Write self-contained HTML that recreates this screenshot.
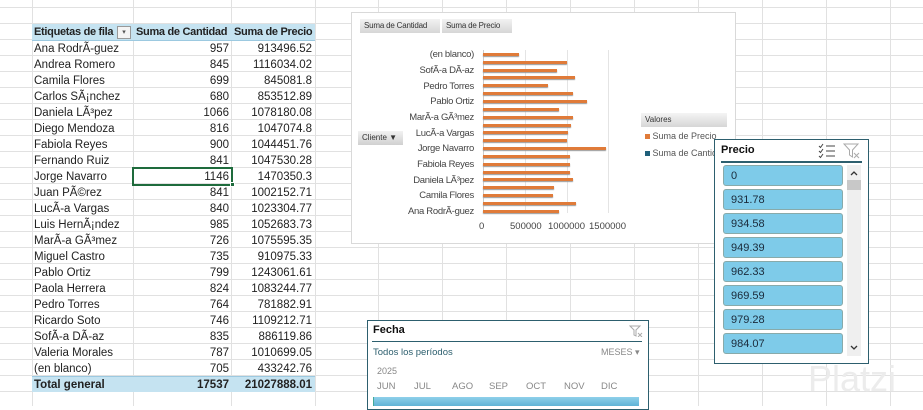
<!DOCTYPE html>
<html><head><meta charset="utf-8"><style>
*{margin:0;padding:0;box-sizing:border-box}
body{width:923px;height:406px;overflow:hidden;background:#fff;position:relative;font-family:"Liberation Sans",Arial,sans-serif;
background-image:repeating-linear-gradient(to bottom,transparent 0,transparent 7px,#e1e1e1 7px,#e1e1e1 8px,transparent 8px,transparent 16px);}
.v{position:absolute;top:0;height:406px;width:1px;background:#e1e1e1}
.r{position:absolute;height:16px;font-size:11.5px;line-height:16px;color:#222}
.a{position:absolute;left:34px;white-space:nowrap}
.c1{position:absolute;left:133px;width:96px;text-align:right}
.c2{position:absolute;left:231px;width:81px;text-align:right}
.h{font-size:11px;font-weight:bold;letter-spacing:-0.3px;white-space:nowrap}
.bar{position:absolute;left:483px;height:3px;background:#e07b39;box-shadow:0 1px 1px #999}
.lbl{position:absolute;right:449px;font-size:9.5px;color:#444;white-space:nowrap;letter-spacing:-0.3px}
.it{position:absolute;left:723px;width:120px;height:21px;background:#7ecbe9;border:1px solid #8aa;border-radius:3px;font-size:11px;line-height:20px;padding-left:7px;color:#1a2a3a}
.m{position:absolute;top:381px;font-size:9.5px;color:#888}
</style></head><body>
<div class="v" style="left:32px"></div><div class="v" style="left:133px"></div><div class="v" style="left:231px"></div><div class="v" style="left:315px"></div>
<div class="v" style="left:378px"></div><div class="v" style="left:442px"></div><div class="v" style="left:506px"></div><div class="v" style="left:570px"></div><div class="v" style="left:634px"></div><div class="v" style="left:698px"></div><div class="v" style="left:762px"></div><div class="v" style="left:826px"></div><div class="v" style="left:890px"></div>

<div style="position:absolute;left:32px;top:24px;width:283px;height:17px;background:#c5e3f1;border-bottom:1px solid #9cc9e0"></div>
<div class="r h" style="top:24px;left:34px">Etiquetas de fila</div>
<div style="position:absolute;left:117px;top:26px;width:14px;height:13px;border:1px solid #999;background:#f4f4f4;font-size:7px;text-align:center;line-height:11px;color:#555">▾</div>
<div class="r h" style="top:24px;left:136px">Suma de Cantidad</div>
<div class="r h" style="top:24px;left:234px">Suma de Precio</div>
<div style="position:absolute;left:32px;top:376px;width:283px;height:16px;background:#c5e3f1;border-top:1px solid #9cc9e0"></div>

<div class="r" style="top:41px;width:315px"><span class="a">Ana RodrÃ-guez</span><span class="c1">957</span><span class="c2">913496.52</span></div>
<div class="r" style="top:57px;width:315px"><span class="a">Andrea Romero</span><span class="c1">845</span><span class="c2">1116034.02</span></div>
<div class="r" style="top:73px;width:315px"><span class="a">Camila Flores</span><span class="c1">699</span><span class="c2">845081.8</span></div>
<div class="r" style="top:89px;width:315px"><span class="a">Carlos SÃ¡nchez</span><span class="c1">680</span><span class="c2">853512.89</span></div>
<div class="r" style="top:105px;width:315px"><span class="a">Daniela LÃ³pez</span><span class="c1">1066</span><span class="c2">1078180.08</span></div>
<div class="r" style="top:121px;width:315px"><span class="a">Diego Mendoza</span><span class="c1">816</span><span class="c2">1047074.8</span></div>
<div class="r" style="top:137px;width:315px"><span class="a">Fabiola Reyes</span><span class="c1">900</span><span class="c2">1044451.76</span></div>
<div class="r" style="top:153px;width:315px"><span class="a">Fernando Ruiz</span><span class="c1">841</span><span class="c2">1047530.28</span></div>
<div class="r" style="top:169px;width:315px"><span class="a">Jorge Navarro</span><span class="c1">1146</span><span class="c2">1470350.3</span></div>
<div class="r" style="top:185px;width:315px"><span class="a">Juan PÃ©rez</span><span class="c1">841</span><span class="c2">1002152.71</span></div>
<div class="r" style="top:201px;width:315px"><span class="a">LucÃ-a Vargas</span><span class="c1">840</span><span class="c2">1023304.77</span></div>
<div class="r" style="top:217px;width:315px"><span class="a">Luis HernÃ¡ndez</span><span class="c1">985</span><span class="c2">1052683.73</span></div>
<div class="r" style="top:233px;width:315px"><span class="a">MarÃ-a GÃ³mez</span><span class="c1">726</span><span class="c2">1075595.35</span></div>
<div class="r" style="top:249px;width:315px"><span class="a">Miguel Castro</span><span class="c1">735</span><span class="c2">910975.33</span></div>
<div class="r" style="top:265px;width:315px"><span class="a">Pablo Ortiz</span><span class="c1">799</span><span class="c2">1243061.61</span></div>
<div class="r" style="top:281px;width:315px"><span class="a">Paola Herrera</span><span class="c1">824</span><span class="c2">1083244.77</span></div>
<div class="r" style="top:297px;width:315px"><span class="a">Pedro Torres</span><span class="c1">764</span><span class="c2">781882.91</span></div>
<div class="r" style="top:313px;width:315px"><span class="a">Ricardo Soto</span><span class="c1">746</span><span class="c2">1109212.71</span></div>
<div class="r" style="top:329px;width:315px"><span class="a">SofÃ-a DÃ-az</span><span class="c1">835</span><span class="c2">886119.86</span></div>
<div class="r" style="top:345px;width:315px"><span class="a">Valeria Morales</span><span class="c1">787</span><span class="c2">1010699.05</span></div>
<div class="r" style="top:361px;width:315px"><span class="a">(en blanco)</span><span class="c1">705</span><span class="c2">433242.76</span></div>
<div class="r" style="top:377px;width:315px;font-weight:bold"><span class="a">Total general</span><span class="c1">17537</span><span class="c2">21027888.01</span></div>
<div style="position:absolute;left:132px;top:167px;width:101px;height:19px;border:2px solid #1e6b3c"></div>
<div style="position:absolute;left:230px;top:182px;width:5px;height:5px;background:#1e6b3c;border:1px solid #fff"></div>

<div style="position:absolute;left:351px;top:12px;width:385px;height:232px;background:#fff;border:1px solid #d9d9d9"></div>
<div style="position:absolute;left:360px;top:19px;width:80px;height:14px;background:linear-gradient(#f2f2f2,#d6d6d6);font-size:8px;line-height:14px;padding-left:4px;color:#333;white-space:nowrap;letter-spacing:-0.2px">Suma de Cantidad</div>
<div style="position:absolute;left:442px;top:19px;width:70px;height:14px;background:linear-gradient(#f2f2f2,#d6d6d6);font-size:8px;line-height:14px;padding-left:4px;color:#333;white-space:nowrap;letter-spacing:-0.2px">Suma de Precio</div>
<div style="position:absolute;left:358px;top:131px;width:45px;height:14px;background:linear-gradient(#f2f2f2,#d0d0d0);font-size:8px;line-height:14px;padding-left:4px;color:#333">Cliente &#9660;</div>
<div style="position:absolute;left:641px;top:113px;width:86px;height:14px;background:linear-gradient(#f4f4f4,#d6d6d6);font-size:8px;line-height:14px;padding-left:4px;color:#333">Valores</div>
<div style="position:absolute;left:645px;top:131px;font-size:9px;color:#555;white-space:nowrap"><span style="display:inline-block;width:5px;height:5px;background:#e07b39"></span> Suma de Precio</div>
<div style="position:absolute;left:645px;top:148px;font-size:9px;color:#555;white-space:nowrap"><span style="display:inline-block;width:5px;height:5px;background:#1f5f7a"></span> Suma de Cantid</div>
<div style="position:absolute;left:483px;top:50px;width:1px;height:163px;background:#ccc"></div>
<div style="position:absolute;left:525px;top:50px;width:1px;height:163px;background:#e4e4e4"></div>
<div style="position:absolute;left:567px;top:50px;width:1px;height:163px;background:#e4e4e4"></div>
<div style="position:absolute;left:608px;top:50px;width:1px;height:163px;background:#e4e4e4"></div>
<div class="bar" style="top:53px;width:36px"></div>
<div class="bar" style="top:60.7px;width:84px"></div>
<div class="bar" style="top:68.6px;width:74px"></div>
<div class="bar" style="top:76.4px;width:92px"></div>
<div class="bar" style="top:84.3px;width:65px"></div>
<div class="bar" style="top:92.1px;width:90px"></div>
<div class="bar" style="top:100px;width:104px"></div>
<div class="bar" style="top:107.8px;width:76px"></div>
<div class="bar" style="top:115.7px;width:90px"></div>
<div class="bar" style="top:123.5px;width:88px"></div>
<div class="bar" style="top:131.4px;width:85px"></div>
<div class="bar" style="top:139.2px;width:84px"></div>
<div class="bar" style="top:147px;width:123px"></div>
<div class="bar" style="top:154.9px;width:87px"></div>
<div class="bar" style="top:162.7px;width:87px"></div>
<div class="bar" style="top:170.6px;width:87px"></div>
<div class="bar" style="top:178.4px;width:90px"></div>
<div class="bar" style="top:186.3px;width:71px"></div>
<div class="bar" style="top:194.1px;width:70px"></div>
<div class="bar" style="top:202px;width:93px"></div>
<div class="bar" style="top:209.8px;width:76px"></div>
<div class="lbl" style="top:49px">(en blanco)</div>
<div class="lbl" style="top:65px">SofÃ-a DÃ-az</div>
<div class="lbl" style="top:81px">Pedro Torres</div>
<div class="lbl" style="top:96px">Pablo Ortiz</div>
<div class="lbl" style="top:112px">MarÃ-a GÃ³mez</div>
<div class="lbl" style="top:128px">LucÃ-a Vargas</div>
<div class="lbl" style="top:143px">Jorge Navarro</div>
<div class="lbl" style="top:159px">Fabiola Reyes</div>
<div class="lbl" style="top:175px">Daniela LÃ³pez</div>
<div class="lbl" style="top:190px">Camila Flores</div>
<div class="lbl" style="top:206px">Ana RodrÃ-guez</div>
<div style="position:absolute;top:221px;left:479px;font-size:9.5px;color:#444">0</div>
<div style="position:absolute;top:221px;left:510px;font-size:9.5px;color:#444">500000</div>
<div style="position:absolute;top:221px;left:548px;font-size:9.5px;color:#444">1000000</div>
<div style="position:absolute;top:221px;left:589px;font-size:9.5px;color:#444">1500000</div>

<div style="position:absolute;left:714px;top:139px;width:155px;height:225px;background:#fff;border:1px solid #2d5f6e"></div>
<div style="position:absolute;left:721px;top:144px;font-size:11px;font-weight:bold;color:#111">Precio</div>
<svg style="position:absolute;left:818px;top:143px" width="18" height="16" viewBox="0 0 18 16" fill="none" stroke="#444" stroke-width="1"><path d="M1 3l1.5 1.5L5 1M1 8l1.5 1.5L5 6M1 13l1.5 1.5L5 11M8 3h9M8 8h9M8 13h9"/></svg>
<svg style="position:absolute;left:843px;top:143px" width="18" height="16" viewBox="0 0 18 16" fill="none" stroke="#aaa" stroke-width="1"><path d="M1 1h14l-5.5 6v7l-3-2V7z"/><path d="M11 10l5 5M16 10l-5 5"/></svg>
<div style="position:absolute;left:721px;top:161px;width:141px;height:2px;background:#2d5f6e"></div>
<div style="position:absolute;left:847px;top:165px;width:14px;height:191px;background:#efefef"></div>
<div style="position:absolute;left:847px;top:180px;width:14px;height:10px;background:#c8c8c8"></div>
<svg style="position:absolute;left:850px;top:170px" width="8" height="6"><path d="M1 5l3-3 3 3" fill="none" stroke="#333" stroke-width="1.3"/></svg>
<svg style="position:absolute;left:850px;top:345px" width="8" height="6"><path d="M1 1l3 3 3-3" fill="none" stroke="#333" stroke-width="1.3"/></svg>
<div class="it" style="top:165px">0</div>
<div class="it" style="top:189px">931.78</div>
<div class="it" style="top:213px">934.58</div>
<div class="it" style="top:237px">949.39</div>
<div class="it" style="top:261px">962.33</div>
<div class="it" style="top:285px">969.59</div>
<div class="it" style="top:309px">979.28</div>
<div class="it" style="top:333px">984.07</div>
<div style="position:absolute;left:808px;top:358px;font-size:36px;color:#ececec">Platzi</div>

<div style="position:absolute;left:367px;top:320px;width:282px;height:90px;background:#fff;border:1px solid #2d5f6e"></div>
<div style="position:absolute;left:373px;top:324px;font-size:11px;font-weight:bold;color:#111">Fecha</div>
<svg style="position:absolute;left:629px;top:325px" width="14" height="12" viewBox="0 0 14 12" fill="none" stroke="#aaa"><path d="M1 1h10l-4 4v6l-2-1V5z"/><path d="M9 8l4 4M13 8l-4 4"/></svg>
<div style="position:absolute;left:372px;top:341px;width:270px;height:1px;background:#2d5f6e"></div>
<div style="position:absolute;left:373px;top:347px;font-size:9.5px;color:#2d5f6e">Todos los períodos</div>
<div style="position:absolute;left:601px;top:347px;font-size:9px;color:#888">MESES ▾</div>
<div style="position:absolute;left:377px;top:366px;font-size:9px;color:#888">2025</div>
<div class="m" style="left:377px">JUN</div><div class="m" style="left:414px">JUL</div><div class="m" style="left:452px">AGO</div><div class="m" style="left:489px">SEP</div><div class="m" style="left:526px">OCT</div><div class="m" style="left:564px">NOV</div><div class="m" style="left:601px">DIC</div>
<div style="position:absolute;left:373px;top:397px;width:266px;height:9px;background:linear-gradient(#8fd0ea,#5fb3d6);border-left:1px solid #4a9"></div>
</body></html>
